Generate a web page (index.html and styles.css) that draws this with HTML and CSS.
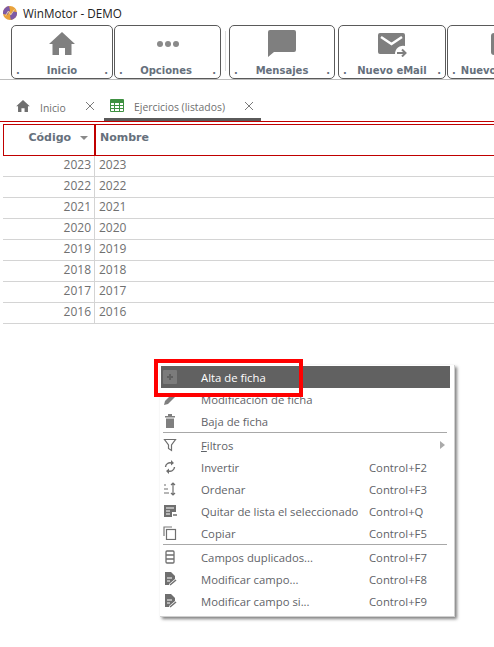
FILE: index.html
```html
<!DOCTYPE html>
<html lang="es">
<head>
    <meta charset="UTF-8">
    <meta name="viewport" content="width=device-width, initial-scale=1.0">
    <title>WinMotor - DEMO</title>
    <link rel="stylesheet" href="styles.css">
</head>
<body>
    <div class="titlebar">
        <svg class="logo" width="14" height="14" viewBox="0 0 16 16">
            <circle cx="8" cy="8" r="8" fill="#e9a23b"/>
            <path d="M0 9A8 8 0 0 1 7 0l1 5-3 5z" fill="#7d5aa6"/>
            <path d="M16 7a8 8 0 0 1-7 9l-1-5 3-5z" fill="#7d5aa6"/>
            <path d="M3 11l3-5 3 4 4-6" fill="none" stroke="#f6dfae" stroke-width="1"/>
        </svg>
        <span>WinMotor - DEMO</span>
    </div>

    <div class="toolbar">
        <div class="grip"></div>
        <div class="tool tool-inicio">
            <svg class="tool-icon icon-home" width="26" height="23" viewBox="0 0 26 23"><path d="M13 0 0 12h3.500v11h6.500v-7h6v7h6.500V12H26z" fill="#7f7f7f"/></svg>
            <div class="tool-foot"><i>.</i><b>Inicio</b><i>.</i></div>
        </div>
        <div class="tool tool-opciones">
            <svg class="tool-icon icon-dots" width="24" height="24" viewBox="0 0 24 24"><circle cx="4" cy="12" r="3" fill="#8a8a8a"/><circle cx="12" cy="12" r="3" fill="#8a8a8a"/><circle cx="20" cy="12" r="3" fill="#8a8a8a"/></svg>
            <div class="tool-foot"><i>.</i><b>Opciones</b><i>.</i></div>
        </div>
        <div class="tool-sep"></div>
        <div class="tool tool-mensajes">
            <svg class="tool-icon" width="28" height="27" viewBox="0 0 28 27"><path d="M2 0h24a2 2 0 0 1 2 2v18a2 2 0 0 1-2 2H6l-6 5V2a2 2 0 0 1 2-2z" fill="#7f7f7f"/></svg>
            <div class="tool-foot"><i>.</i><b>Mensajes</b><i>.</i></div>
        </div>
        <div class="tool tool-email">
            <svg class="tool-icon icon-mail" width="29" height="24" viewBox="0 0 29 24"><path d="M2 0h23a2 2 0 0 1 2 2v11a8 8 0 0 0-10 8H2a2 2 0 0 1-2-2V2a2 2 0 0 1 2-2z" fill="#7f7f7f"/><path d="M3 4l10.500 7L24 4" fill="none" stroke="#fff" stroke-width="2.500"/><path d="M19 20h8M24 16.500l3.500 3.500-3.500 3.500" fill="none" stroke="#7f7f7f" stroke-width="2"/></svg>
            <div class="tool-foot"><i>.</i><b>Nuevo eMail</b><i>.</i></div>
        </div>
        <div class="tool tool-nuevo">
            <svg class="tool-icon icon-mail" width="30" height="24" viewBox="0 0 30 24"><rect x="0" y="0" width="28" height="22" rx="3" fill="#7f7f7f"/></svg>
            <div class="tool-foot"><i>.</i><b>Nuevo</b></div>
        </div>
    </div>

    <div class="tabs">
        <div class="tab tab-home">
            <svg class="tab-icon" width="14" height="12" viewBox="0 0 26 23"><path d="M13 0 0 12h3.500v11h6.500v-7h6v7h6.500V12H26z" fill="#6f6f6f"/></svg>
            <span class="tab-label">Inicio</span>
            <svg class="tab-close" width="10" height="10" viewBox="0 0 10 10"><path d="M1 1l8 8M9 1l-8 8" stroke="#7a7a7a" stroke-width="1"/></svg>
        </div>
        <div class="tab tab-active">
            <svg class="tab-icon" width="14" height="13" viewBox="0 0 14 13"><rect width="14" height="13" rx="1" fill="#3f9142"/><path d="M1 4h3v2H1zm4 0h4v2H5zm5 0h3v2h-3zM1 7h3v2H1zm4 0h4v2H5zm5 0h3v2h-3zM1 10h3v2H1zm4 0h4v2H5zm5 0h3v2h-3z" fill="#fff"/></svg>
            <span class="tab-label">Ejercicios (listados)</span>
            <svg class="tab-close" width="10" height="10" viewBox="0 0 10 10"><path d="M1 1l8 8M9 1l-8 8" stroke="#7a7a7a" stroke-width="1"/></svg>
        </div>
    </div>

    <div class="grid">
        <div class="grid-head">
            <div class="col-code">Código <span class="sort"></span></div>
            <div class="col-name">Nombre</div>
        </div>
        <div class="grid-row"><div class="col-code">2023</div><div class="col-name">2023</div></div>
        <div class="grid-row"><div class="col-code">2022</div><div class="col-name">2022</div></div>
        <div class="grid-row"><div class="col-code">2021</div><div class="col-name">2021</div></div>
        <div class="grid-row"><div class="col-code">2020</div><div class="col-name">2020</div></div>
        <div class="grid-row"><div class="col-code">2019</div><div class="col-name">2019</div></div>
        <div class="grid-row"><div class="col-code">2018</div><div class="col-name">2018</div></div>
        <div class="grid-row"><div class="col-code">2017</div><div class="col-name">2017</div></div>
        <div class="grid-row"><div class="col-code">2016</div><div class="col-name">2016</div></div>
    </div>

    <div class="menu">
        <div class="item selected">
            <svg class="ic" width="14" height="14" viewBox="0 0 14 14"><rect width="14" height="14" rx="1" fill="#7b7b7b"/><path d="M7 4v6M4 7h6" stroke="#5f5f5f" stroke-width="2"/></svg>
            <span class="item-label">Alta de ficha</span>
        </div>
        <div class="item">
            <svg class="ic" width="14" height="14" viewBox="0 0 14 14"><path d="M10 1l3 3-8 8-4 1 1-4z" fill="#7f7f7f"/></svg>
            <span class="item-label">Modificación de ficha</span>
        </div>
        <div class="item">
            <svg class="ic" width="14" height="14" viewBox="0 0 14 14"><path d="M2 2h10v1.500H2zM5 0h4v2H5zM3 4.500h8V14H3z" fill="#7f7f7f"/></svg>
            <span class="item-label">Baja de ficha</span>
        </div>
        <div class="rule"></div>
        <div class="item">
            <svg class="ic" width="14" height="14" viewBox="0 0 14 14"><path d="M1.500 1.500h11L8.500 7v5.500l-3-2V7z" fill="none" stroke="#6f6f6f" stroke-width="1.200"/></svg>
            <span class="item-label"><u>F</u>iltros</span>
            <span class="arrow"></span>
        </div>
        <div class="item">
            <svg class="ic" width="14" height="14" viewBox="0 0 14 14"><path d="M2.500 7a4.500 4.500 0 0 1 6-4M11.500 7a4.500 4.500 0 0 1-6 4" fill="none" stroke="#6f6f6f" stroke-width="1.400"/><path d="M8 0v5.500L11 3zM6 14V8.500L3 11z" fill="#6f6f6f"/></svg>
            <span class="item-label">Invertir</span>
            <span class="key">Control+F2</span>
        </div>
        <div class="item">
            <svg class="ic" width="14" height="14" viewBox="0 0 14 14"><path d="M1 3h2M1 7h4M1 11h5" stroke="#6f6f6f" stroke-width="1.200"/><path d="M10 1v12M8 3l2-2 2 2M8 11l2 2 2-2" fill="none" stroke="#6f6f6f" stroke-width="1.200"/></svg>
            <span class="item-label">Ordenar</span>
            <span class="key">Control+F3</span>
        </div>
        <div class="item">
            <svg class="ic" width="14" height="14" viewBox="0 0 14 14"><path d="M1 1h12v7H9v5H1z" fill="#6f6f6f"/><path d="M3 4h8M3 7h4M3 10h4" stroke="#fff"/><path d="M10 11h4" stroke="#6f6f6f" stroke-width="1.500"/></svg>
            <span class="item-label">Quitar de lista el seleccionado</span>
            <span class="key">Control+Q</span>
        </div>
        <div class="item">
            <svg class="ic" width="14" height="14" viewBox="0 0 14 14"><path d="M1 10V1h8" fill="none" stroke="#7a7a7a" stroke-width="1.200"/><rect x="3.500" y="3.500" width="9" height="10" fill="none" stroke="#6f6f6f" stroke-width="1.200"/></svg>
            <span class="item-label">Copiar</span>
            <span class="key">Control+F5</span>
        </div>
        <div class="rule"></div>
        <div class="item">
            <svg class="ic" width="14" height="14" viewBox="0 0 14 14"><rect x="3" y="1" width="8" height="12" rx="1" fill="none" stroke="#6f6f6f" stroke-width="1.300"/><path d="M3 5h8M3 9h8" stroke="#6f6f6f" stroke-width="1.300"/></svg>
            <span class="item-label">Campos duplicados...</span>
            <span class="key">Control+F7</span>
        </div>
        <div class="item">
            <svg class="ic" width="14" height="14" viewBox="0 0 14 14"><path d="M2 0h6l4 4v3l-6 5v1H2z" fill="#6f6f6f"/><path d="M4 6h5M4 9h3" stroke="#fff"/><path d="M7 13l6-5" stroke="#6f6f6f" stroke-width="1.500"/></svg>
            <span class="item-label">Modificar campo...</span>
            <span class="key">Control+F8</span>
        </div>
        <div class="item">
            <svg class="ic" width="14" height="14" viewBox="0 0 14 14"><path d="M2 0h6l4 4v3l-6 5v1H2z" fill="#6f6f6f"/><path d="M4 6h5M4 9h3" stroke="#fff"/><path d="M7 13l6-5" stroke="#6f6f6f" stroke-width="1.500"/></svg>
            <span class="item-label">Modificar campo si...</span>
            <span class="key">Control+F9</span>
        </div>
    </div>

    <div class="callout"></div>
</body>
</html>
```

FILE: styles.css
```css
html, body {
    margin: 0;
    padding: 0;
}
body {
    width: 494px;
    height: 647px;
    overflow: hidden;
    position: relative;
    background: white;
    font-family: "Open Sans", "Noto Sans", sans-serif;
    color: #5f6368;
}
.titlebar {
    height: 25px;
    display: flex;
    align-items: center;
    padding-left: 3px;
    gap: 6px;
    font-size: 11.700px;
    color: #222;
}
.logo {
    flex: none;
}
.toolbar {
    height: 55px;
    box-sizing: border-box;
    display: flex;
    border-bottom: 1px solid #bdbdbd;
    overflow: hidden;
    padding-left: 4px;
}
.grip {
    width: 4px;
    height: 17px;
    margin: 18px 3px 0 0;
    flex: none;
    background: radial-gradient(#bbb 40%, transparent 45%) 0 0 / 2px 2px;
}
.tool {
    flex: none;
    box-sizing: border-box;
    height: 54px;
    margin-right: 2px;
    border: 1px solid #5a5a5a;
    border-radius: 5px;
    display: flex;
    flex-direction: column;
    align-items: center;
}
.tool-inicio { width: 102px; margin-right: 1px; }
.tool-opciones { width: 107px; }
.tool-opciones b { margin-right: 3px; }
.tool-mensajes { width: 106px; margin-right: 3px; }
.tool-email { width: 108px; margin-right: 1px; }
.tool-nuevo { width: 100px; align-items: flex-start; }
.tool-nuevo .tool-icon { margin-left: 43px; }
.tool-sep {
    width: 1px;
    height: 40px;
    margin: 6px 3px 0 2px;
    background: #ddd;
    flex: none;
}
.tool-icon {
    flex: none;
    margin-top: 4px;
}
.icon-home {
    margin-top: 6px;
}
.icon-dots {
    margin-top: 6px;
}
.icon-mail {
    margin-top: 7px;
}
.tool-foot {
    margin-top: auto;
    width: 100%;
    box-sizing: border-box;
    height: 18px;
    padding: 3px 4px 0;
    display: flex;
    justify-content: space-between;
    align-items: center;
    font: bold 10px "DejaVu Sans", sans-serif;
    color: #66707c;
}
.tool-foot i {
    font-style: normal;
}
.tool-nuevo .tool-foot {
    justify-content: flex-start;
    gap: 5px;
}
.tabs {
    height: 41px;
    display: flex;
    padding-left: 16px;
    box-sizing: border-box;
}
.tab {
    display: flex;
    align-items: center;
    height: 41px;
    padding-top: 15px;
    box-sizing: border-box;
    font-size: 10.400px;
    color: #6f6f6f;
}
.tab-home {
    width: 88px;
}
.tab-home .tab-label {
    margin-left: 10px;
    width: 45px;
}
.tab-home svg {
    margin-bottom: 4px;
}
.tab-active {
    width: 157px;
    padding-left: 6px;
    border-bottom: 3px solid #5a5a5a;
    height: 41px;
}
.tab-active svg {
    margin-bottom: 2px;
}
.tab-active .tab-label {
    margin-left: 10px;
    width: 110px;
}
.grid {
    border-top: 1px solid #c00000;
    padding: 2px 0 0 3px;
}
.grid-head {
    display: flex;
    height: 32px;
    box-sizing: border-box;
    border: 1px solid #c00000;
    border-right: none;
    font: bold 11px "DejaVu Sans", sans-serif;
    color: #66707c;
}
.grid-head .col-code {
    width: 92px;
    box-sizing: border-box;
    border-right: 2px solid #c00000;
    padding-right: 6px;
    line-height: 26px;
    text-align: right;
}
.grid-head .col-name {
    padding-left: 4px;
    line-height: 26px;
}
.sort {
    display: inline-block;
    width: 0;
    height: 0;
    margin-left: 5px;
    vertical-align: 1px;
    border: 4px solid transparent;
    border-top: 4px solid #8a8a8a;
    border-bottom: none;
}
.grid-row {
    display: flex;
    height: 21px;
    box-sizing: border-box;
    border-bottom: 1px solid #d4d4d4;
    font-size: 12px;
    line-height: 17px;
    color: #707070;
}
.grid-row .col-code {
    width: 92px;
    box-sizing: border-box;
    border-right: 1px solid #d4d4d4;
    padding-right: 3px;
    text-align: right;
}
.grid-row .col-name {
    padding-left: 4px;
}
.menu {
    position: absolute;
    left: 160px;
    top: 365px;
    width: 295px;
    height: 252px;
    padding: 1px;
    box-sizing: border-box;
    background: white;
    border-right: 1px solid #d0d0d0;
    border-bottom: 1px solid #d0d0d0;
    box-shadow: 2px 2px 3px rgba(0, 0, 0, 0.5);
    font-size: 11.300px;
    color: #5f6368;
}
.item {
    display: flex;
    align-items: center;
    height: 22px;
    width: 289px;
    position: relative;
}
.item.selected {
    background: #616161;
    color: white;
}
.ic {
    flex: none;
    margin-left: 2px;
    width: 14px;
}
.item-label {
    margin-left: 24px;
    width: 168px;
    white-space: nowrap;
}
.arrow {
    position: absolute;
    right: 5px;
    top: 7px;
    border: 4px solid transparent;
    border-left: 5px solid #aaa;
    border-right: none;
}
.rule {
    height: 1px;
    background: #a8a8a8;
    margin: 0 6px 1px 2px;
}
.callout {
    position: absolute;
    left: 154px;
    top: 359px;
    width: 149px;
    height: 38px;
    box-sizing: border-box;
    border: 4px solid #f00;
}
```
